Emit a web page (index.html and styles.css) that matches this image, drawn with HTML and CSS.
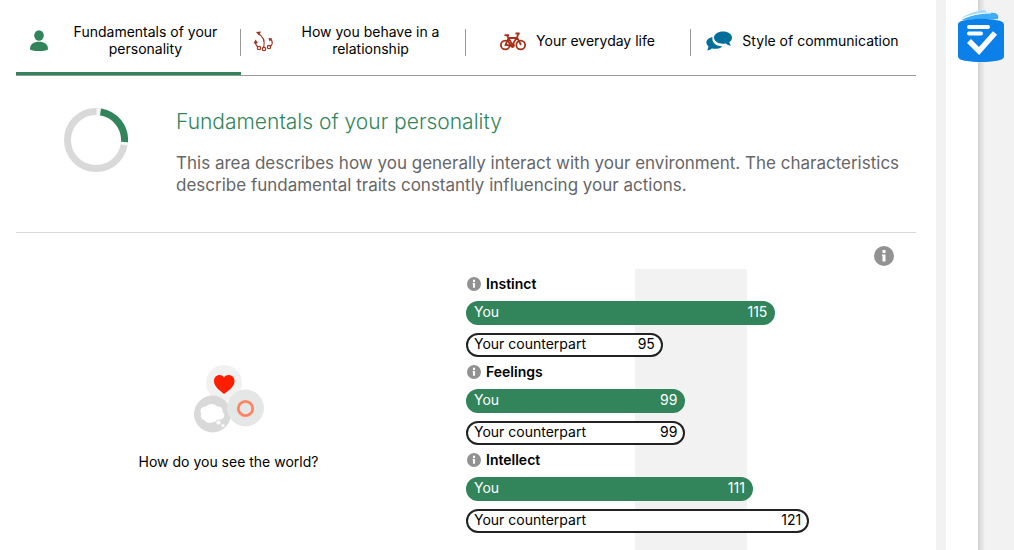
FILE: index.html
```html
<!DOCTYPE html>
<html lang="en">

<head>
    <meta charset="UTF-8">
    <meta name="viewport" content="width=device-width, initial-scale=1.0">
    <title>Fundamentals of your personality</title>
    <link rel="stylesheet" href="styles.css">
</head>

<body>
    <svg class="sprite" aria-hidden="true">
        <symbol id="info" viewBox="0 0 20 20">
            <circle cx="10" cy="10" r="10" />
            <path fill="#fff" d="M8.500 4h3v3h-3zM8 8.500h3.500v7h-3v-5.500H8z" />
        </symbol>
    </svg>

    <main class="results">
        <nav class="tabs">
            <button type="button" class="tab active">
                <svg class="tab-icon" viewBox="0 0 26 26" fill="#32845b">
                    <ellipse cx="13" cy="8.500" rx="4.800" ry="5.200" />
                    <path d="M4 22C4 17 8 14.800 13 14.800s9 2.200 9 7.200c0 1.400-4 2-9 2S4 23.400 4 22z" />
                </svg>
                <span>Fundamentals of your personality</span>
            </button>
            <button type="button" class="tab">
                <svg class="tab-icon" viewBox="0 0 26 26" fill="none" stroke="#9c3420" stroke-width="1.200">
                    <path d="M7 6.500C12 9 14 14 12.800 20M4.500 15c0 3 1 4 2.600 5M18.500 19.500c3-1 4-4.500 1-7.500" />
                    <circle cx="8" cy="21" r="1.700" />
                    <circle cx="13" cy="22" r="1.700" />
                    <circle cx="18" cy="20" r="1.700" />
                    <path fill="#9c3420" stroke="none" d="M5 5l5-.5-2 4zM4.500 12.500l2.500 3.500-4.500.5zM17.500 11l4 .5-3 3z" />
                </svg>
                <span>How you behave in a relationship</span>
            </button>
            <button type="button" class="tab">
                <svg class="tab-icon" viewBox="0 0 26 26" fill="none" stroke="#a63018" stroke-width="1.800">
                    <circle cx="5.300" cy="18" r="4.400" />
                    <circle cx="20.700" cy="18" r="4.400" />
                    <path d="M5.500 18L8.500 11h8l-4.500 7.500zM8.500 11l4 7.500M7 8.500l1.500 2.500M4.500 8.200H9M15.500 6.500h4.200M18.500 6.500l-1.500 4 4 7.500" />
                    <circle cx="12.500" cy="18.500" r="1.500" />
                </svg>
                <span>Your everyday life</span>
            </button>
            <button type="button" class="tab">
                <svg class="tab-icon" viewBox="0 0 26 26" fill="#036e9b">
                    <path d="M6.500 10C2 11 0 13.500.500 16c.2 1.500 1 2.700 2 3.500-.2 1.500-.7 2.600-1.300 3.700 2 0 3.500-.8 4.600-1.800 4 1 8.500.3 10.500-2.200C10 19.500 5.500 15.500 6.500 10z" />
                    <path d="M17 4.500c5 0 9 2.600 9 6 0 2-1 3.600-2.700 4.700.2 1.300.8 2.300 1.700 3.300-2 0-3.800-.6-5-2-1 .2-2 .3-3 .3-5 0-9-2.700-9-6.200s4-6.100 9-6.100z" />
                </svg>
                <span>Style of communication</span>
            </button>
        </nav>

        <section class="intro">
            <div class="progress">
                <svg viewBox="0 0 64 64" fill="none" stroke-width="7">
                    <circle cx="32" cy="32" r="28.500" stroke="#d9d9d9" />
                    <path stroke="#f7f7f7" d="M32.500 3.500A28.500 28.500 0 0 1 60.200 37" />
                    <path stroke="#32845b" d="M36.500 3.900A28.500 28.500 0 0 1 60.500 34" />
                </svg>
            </div>
            <div class="intro-text">
                <h1>Fundamentals of your personality</h1>
                <p>This area describes how you generally interact with your environment. The characteristics describe fundamental traits constantly influencing your actions.</p>
            </div>
        </section>

        <section class="topic">
            <div class="topic-help">
                <button type="button" aria-label="More information"><svg class="info-large"><use href="#info" /></svg></button>
            </div>

            <div class="topic-body">
                <div class="question">
                    <svg viewBox="0 0 70 70">
                        <circle cx="30" cy="18" r="18" fill="#f1f1f1" />
                        <circle cx="18.500" cy="49" r="18.500" fill="#d9d9d9" />
                        <circle cx="51.500" cy="43" r="18.500" fill="#e5e7e6" />
                        <path fill="#ff1e00" d="M30 29C26 25.500 20 22 20 16c0-6 7-8 10-3.500C33 8 40.500 10 40.500 16c0 6-6 9.500-10.500 13z" />
                        <circle cx="51.500" cy="43.500" r="7.200" fill="none" stroke="#ff8562" stroke-width="2.800" />
                        <path fill="#fff" d="M10 55c-3-1-4-4-2.500-6C5 46 7 41.500 12 41.500c2-3.500 9-3.500 11 0 4-.5 6 2 5.500 5.500 3 2 2 6.500-1.500 7.500-4 0-5 3-9 3-3 1-6 0-8-2.500z" />
                        <circle cx="24.500" cy="57.500" r="2.600" fill="#fff" stroke="#d9d9d9" />
                        <circle cx="29" cy="60.500" r="1.500" fill="#fff" />
                    </svg>
                    <p>How do you see the world?</p>
                </div>

                <!-- scale runs from 60 to 140, shaded band is 90 to 110 -->
                <div class="chart">
                    <div class="trait">
                        <h2><svg class="info-small"><use href="#info" /></svg>Instinct</h2>
                        <div class="bar you" style="width: 68.75%"><span>You</span><span>115</span></div>
                        <div class="bar counterpart" style="width: 43.75%"><span>Your counterpart</span><span>95</span></div>
                    </div>
                    <div class="trait">
                        <h2><svg class="info-small"><use href="#info" /></svg>Feelings</h2>
                        <div class="bar you" style="width: 48.75%"><span>You</span><span>99</span></div>
                        <div class="bar counterpart" style="width: 48.75%"><span>Your counterpart</span><span>99</span></div>
                    </div>
                    <div class="trait">
                        <h2><svg class="info-small"><use href="#info" /></svg>Intellect</h2>
                        <div class="bar you" style="width: 63.75%"><span>You</span><span>111</span></div>
                        <div class="bar counterpart" style="width: 76.25%"><span>Your counterpart</span><span>121</span></div>
                    </div>
                </div>
            </div>
        </section>
    </main>

    <div class="rail"></div>
    <div class="outside"></div>

    <svg class="badge" viewBox="0 0 46 52">
        <path fill="#3fadf5" d="M3 10C14 4 27 2 37 3c3 1 4 3 3 6z" />
        <path fill="#a5dafb" d="M2 9C10 3 20 .5 27 0l2 2.500C19 3 10 5.500 2 9z" />
        <path fill="none" stroke="#fff" d="M3 9.500C12 5 22 3 33 3" />
        <path fill="#0a80e8" d="M0 15c0-3 3-4 7-4.700 10-2 22-2 32 0 4 .7 7 1.700 7 4.700v31c0 3-3 4-7 4.700-10 1.700-22 1.700-32 0C3 50 0 49 0 46z" />
        <path fill="none" stroke="#fff" stroke-width="4" stroke-linecap="round" d="M11 17h19M11 23.500h12" />
        <path fill="none" stroke="#fff" stroke-width="5.500" d="M11 31l10 10 16-18" />
    </svg>
</body>

</html>
```
FILE: styles.css
```css
* {
    box-sizing: border-box;
}

body {
    margin: 0;
    display: flex;
    min-height: 100vh;
    font-family: Inter, 'Liberation Sans', sans-serif;
    font-size: 14px;
    color: #000;
    background-color: #f2f2f2;
}

h1,
h2,
p {
    margin: 0;
}

button {
    font: inherit;
    color: inherit;
    background: none;
    border: 0;
    padding: 0;
    cursor: pointer;
}

.sprite {
    position: absolute;
    width: 0;
    height: 0;
}

.results {
    flex: 1;
    display: flex;
    flex-direction: column;
    padding: 0 20px 0 16px;
    background-color: #fff;
}

.tabs {
    display: grid;
    grid-template-columns: repeat(4, 1fr);
    height: 76px;
    border-bottom: 1px solid #999;
}

.tab {
    position: relative;
    display: flex;
    align-items: center;
    justify-content: center;
    gap: 10px;
    padding: 8px 12px 0 10px;
    line-height: 17px;
    border-bottom: 3px solid transparent;
}

.tab.active {
    border-bottom-color: #32845b;
}

.tab:not(:last-child)::after {
    content: '';
    position: absolute;
    right: 0;
    top: 29px;
    height: 27px;
    border-right: 1px solid #999;
}

.tab-icon {
    width: 26px;
    height: 26px;
    flex: none;
}

.intro {
    display: flex;
    padding: 32px 0 36px;
    border-bottom: 1px solid #d9d9d9;
}

.progress {
    flex: 0 0 160px;
    text-align: center;
}

.progress svg {
    width: 64px;
    height: 64px;
}

.intro h1 {
    margin-bottom: 16px;
    font-size: 21px;
    font-weight: 300;
    line-height: 28px;
    color: #32845b;
}

.intro p {
    font-size: 17px;
    line-height: 22px;
    color: #666;
}

.topic {
    flex: 1;
    display: flex;
    flex-direction: column;
}

.topic-help {
    display: flex;
    justify-content: flex-end;
    padding: 13px 22px 3px 0;
}

.info-large {
    display: block;
    width: 20px;
    height: 20px;
    fill: #929292;
}

.info-small {
    width: 14px;
    height: 14px;
    fill: #929292;
}

.topic-body {
    flex: 1;
    display: grid;
    grid-template-columns: 17fr 18fr;
    gap: 25px;
}

.question {
    padding-top: 96px;
    text-align: center;
}

.question svg {
    display: block;
    width: 70px;
    height: 70px;
    margin: 0 auto 17px;
}

.question p {
    line-height: 20px;
}

.chart {
    background: linear-gradient(to right, transparent 37.5%, #f2f2f2 37.5%, #f2f2f2 62.5%, transparent 62.5%);
}

.trait h2 {
    display: flex;
    align-items: center;
    gap: 5px;
    height: 32px;
    padding-left: 1px;
    padding-bottom: 3px;
    font-size: 14px;
    font-weight: 600;
}

.bar {
    display: flex;
    align-items: center;
    justify-content: space-between;
    height: 24px;
    padding: 0 6px 3px;
    border: 2px solid #32845b;
    border-radius: 12px;
}

.bar.you {
    margin-bottom: 8px;
    color: #fff;
    background-color: #32845b;
}

.bar.counterpart {
    background-color: #fff;
    border-color: #222;
}

.rail {
    width: 42px;
    background-color: #fff;
    border-left: 10px solid #f2f2f2;
}

.outside {
    width: 36px;
    background: linear-gradient(to right, #d2d2d2, #f2f2f2 7px);
}

.badge {
    position: absolute;
    top: 10px;
    right: 10px;
    width: 46px;
    height: 52px;
}
```
